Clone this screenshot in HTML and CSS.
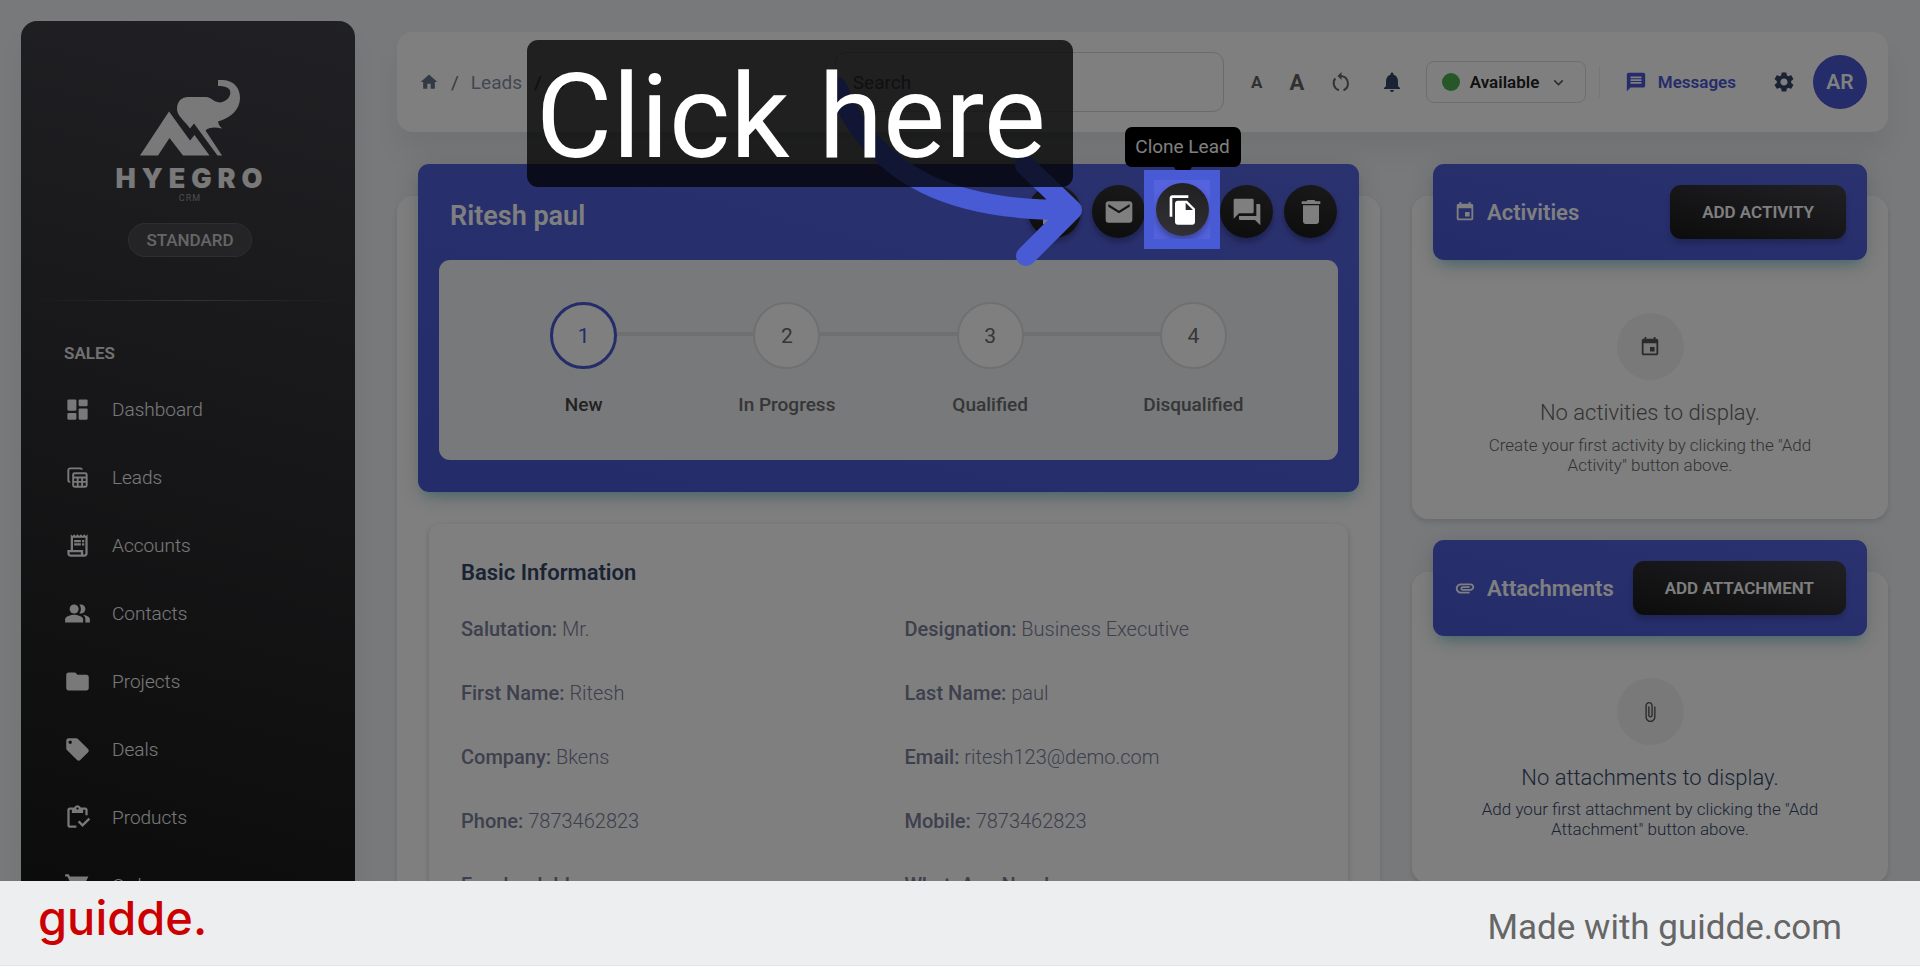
FILE: index.html
```html
<!DOCTYPE html>
<html lang="en">
<head>
<meta charset="utf-8">
<title>Hyegro CRM – Lead</title>
<link rel="stylesheet" href="styles.css">
</head>
<body>
<div class="stage">
  <aside class="sidebar">
    <div class="brand">
      <svg class="brand-mark" viewBox="0 0 100 76" aria-hidden="true">
        <path d="M0 75.500L29 31.500 50 60.500 54.500 55 69.500 75.500H43L29.500 58 18 75.500z"/>
        <path d="M37 29C37 21 42 17 48 17H66C71 17 73 22 80 22.500C91 21 93 10 87 7.500C84 6 81 6 78 6V0C92-1 100 6 100 18C100 30 90 38 78 41.500L79 45 82 48.500C75 47 69 47 65.500 50.500L82 75.500H77.500L54 43.500 50 48.500C45 41 37 36 37 29z"/>
      </svg>
      <div class="brand-name">HYEGRO</div>
      <div class="brand-sub">CRM</div>
      <span class="plan">STANDARD</span>
    </div>
    <hr class="side-rule">
    <h2 class="side-title">SALES</h2>
    <nav class="side-nav">
      <a href="#"><svg viewBox="0 0 24 24"><rect x="3" y="3" width="8" height="10" rx="1"/><rect x="13" y="3" width="8" height="6" rx="1"/><rect x="3" y="15" width="8" height="6" rx="1"/><rect x="13" y="11" width="8" height="10" rx="1"/></svg>Dashboard</a>
      <a href="#"><svg viewBox="-2 -2 28 28" class="line"><path d="M4.500 16.500H4a1.500 1.500 0 0 1-1.500-1.500V4.500A2 2 0 0 1 4.500 2.500H15A1.500 1.500 0 0 1 16.500 4"/><rect x="7.500" y="7.500" width="14" height="14" rx="1.500"/><path d="M7.500 12h14M7.500 16.500h14M12.200 12v9.500M16.800 12v9.500"/></svg>Leads</a>
      <a href="#"><svg viewBox="0 0 24 24"><path d="M19.500 3.500 18 2l-1.500 1.500L15 2l-1.500 1.500L12 2l-1.500 1.500L9 2 7.500 3.500 6 2v14H3v3c0 1.660 1.340 3 3 3h12c1.660 0 3-1.340 3-3V2zM15 20H6c-.550 0-1-.450-1-1v-1h10zm4-1c0 .550-.450 1-1 1s-1-.450-1-1v-3H8V5h11z"/><path d="M9 7h6v2H9zM16 7h2v2h-2zM9 10h6v2H9zM16 10h2v2h-2z"/></svg>Accounts</a>
      <a href="#"><svg viewBox="0 0 24 24"><path d="M16.670 13.130C18.040 14.060 19 15.320 19 17v3h4v-3c0-2.180-3.570-3.470-6.330-3.870zM15 12c2.210 0 4-1.790 4-4s-1.790-4-4-4c-.470 0-.910.100-1.330.240C14.500 5.270 15 6.580 15 8s-.500 2.730-1.330 3.760c.420.140.860.240 1.330.240z"/><circle cx="9" cy="8" r="4"/><path d="M9 13c-2.670 0-8 1.340-8 4v3h16v-3c0-2.660-5.330-4-8-4z"/></svg>Contacts</a>
      <a href="#"><svg viewBox="0 0 24 24"><path d="M10 4H4c-1.100 0-2 .900-2 2v12c0 1.100.900 2 2 2h16c1.100 0 2-.900 2-2V8c0-1.100-.900-2-2-2h-8z"/></svg>Projects</a>
      <a href="#"><svg viewBox="0 0 24 24"><path d="M21.410 11.580l-9-9C12.050 2.220 11.550 2 11 2H4c-1.100 0-2 .900-2 2v7c0 .550.220 1.050.590 1.420l9 9c.360.360.860.580 1.410.580s1.050-.220 1.410-.590l7-7c.370-.360.590-.860.590-1.410s-.230-1.060-.590-1.420zM5.500 7C4.670 7 4 6.330 4 5.500S4.670 4 5.500 4 7 4.670 7 5.500 6.330 7 5.500 7z"/></svg>Deals</a>
      <a href="#"><svg viewBox="0 0 24 24"><path d="M5 5h2v3h10V5h2v5h2V5c0-1.100-.900-2-2-2h-4.180C14.400 1.840 13.300 1 12 1s-2.400.840-2.820 2H5c-1.100 0-2 .900-2 2v14c0 1.100.900 2 2 2h6v-2H5zm7-2c.550 0 1 .450 1 1s-.450 1-1 1-1-.450-1-1 .450-1 1-1z"/><path d="M21.750 12.250l-5.250 5.250-2.750-2.750-1.500 1.500 4.250 4.250 6.750-6.750z"/></svg>Products</a>
      <a href="#"><svg viewBox="0 0 24 24"><path d="M7 18c-1.100 0-1.990.900-1.990 2S5.900 22 7 22s2-.900 2-2-.900-2-2-2zM1 2v2h2l3.600 7.590-1.350 2.450C4.520 15.370 5.480 17 7 17h12v-2H7.420l1.130-2h7.450c.750 0 1.410-.410 1.750-1.030L21.700 4H5.210l-.940-2H1z"/></svg>Orders</a>
    </nav>
  </aside>

  <div class="page">
    <header class="topbar">
      <nav class="crumbs">
        <a href="#" aria-label="Home"><svg viewBox="0 0 24 24"><path d="M10 20v-6h4v6h5v-8h3L12 3 2 12h3v8z"/></svg></a>
        <span class="sep">/</span><a href="#">Leads</a><span class="sep">/</span><span class="here">S</span>
      </nav>
      <input class="search" type="text" placeholder="Search" aria-label="Search">
      <div class="tools">
        <button class="tool small-a" aria-label="Smaller text">A</button>
        <button class="tool big-a" aria-label="Larger text">A</button>
        <button class="tool" aria-label="Reset text"><svg viewBox="0 0 24 24"><path d="M12.500 2v8L8.500 6z"/><path class="ring" d="M12 6a7.500 7.500 0 0 1 2.500 14.300M6.300 8.400a7.500 7.500 0 0 0 3.600 11.800"/></svg></button>
        <button class="tool bell" aria-label="Notifications"><svg viewBox="0 0 24 24"><path d="M12 22c1.100 0 2-.900 2-2h-4c0 1.100.890 2 2 2zm6-6v-5c0-3.070-1.640-5.640-4.500-6.320V4c0-.830-.670-1.500-1.500-1.500s-1.500.670-1.500 1.500v.680C7.630 5.360 6 7.920 6 11v5l-2 2v1h16v-1z"/></svg></button>
        <button class="status"><i class="dot"></i>Available<svg viewBox="0 0 24 24"><path d="M6 9l6 6 6-6"/></svg></button>
        <span class="bar"></span>
        <a class="messages" href="#"><svg viewBox="0 0 24 24"><path d="M20 2H4c-1.100 0-2 .900-2 2v18l4-4h14c1.100 0 2-.900 2-2V4c0-1.100-.900-2-2-2zm-2 12H6v-2h12zm0-3H6V9h12zm0-3H6V6h12z"/></svg>Messages</a>
        <button class="tool gear" aria-label="Settings"><svg viewBox="0 0 24 24"><path d="M19.140 12.940c.040-.300.060-.610.060-.940 0-.320-.020-.640-.070-.940l2.030-1.580c.180-.140.230-.410.120-.610l-1.920-3.320c-.120-.220-.370-.290-.590-.220l-2.390.960c-.500-.380-1.030-.700-1.620-.940l-.360-2.540c-.040-.240-.240-.410-.480-.410h-3.840c-.240 0-.430.170-.470.410l-.360 2.540c-.590.240-1.130.570-1.620.940l-2.390-.960c-.220-.080-.470 0-.590.220L2.740 8.870c-.120.210-.080.470.120.610l2.030 1.580c-.050.300-.090.630-.090.940s.020.640.070.940l-2.030 1.580c-.180.140-.230.410-.120.610l1.920 3.320c.120.220.370.290.590.220l2.390-.960c.500.380 1.030.700 1.620.940l.360 2.540c.050.240.240.410.480.410h3.840c.240 0 .440-.170.470-.410l.360-2.540c.590-.240 1.130-.560 1.620-.940l2.390.960c.220.080.470 0 .590-.220l1.920-3.320c.120-.220.070-.470-.120-.610zM12 15.600c-1.980 0-3.600-1.620-3.600-3.600s1.620-3.600 3.600-3.600 3.600 1.620 3.600 3.600-1.620 3.600-3.600 3.600z"/></svg></button>
        <button class="avatar">AR</button>
      </div>
    </header>

    <main class="content">
      <section class="card lead">
        <div class="card-head lead-head">
          <div class="lead-top">
            <h1>Ritesh paul</h1>
            <div class="actions">
              <button class="round" aria-label="Edit"><svg viewBox="0 0 24 24"><path d="M3 17.250V21h3.750L17.810 9.940l-3.750-3.750zM20.710 7.040a1 1 0 0 0 0-1.410l-2.340-2.340a1 1 0 0 0-1.410 0l-1.830 1.830 3.750 3.750z"/></svg></button>
              <button class="round" aria-label="Email"><svg viewBox="0 0 24 24"><path d="M20 4H4c-1.100 0-1.990.900-1.990 2L2 18c0 1.100.900 2 2 2h16c1.100 0 2-.900 2-2V6c0-1.100-.900-2-2-2zm0 4l-8 5-8-5V6l8 5 8-5z"/></svg></button>
              <div class="clone">
                <button class="round raised" aria-label="Clone Lead"><svg viewBox="0 0 24 24"><path d="M16 1H4c-1.100 0-2 .900-2 2v14h2V3h12zm-1 4H8c-1.100 0-1.990.900-1.990 2L6 21c0 1.100.890 2 1.990 2H19c1.100 0 2-.900 2-2V11zm-1 7V6.500l5.500 5.500z"/></svg></button>
                <div class="tip">Clone Lead</div>
                <div class="spot"></div>
                <svg class="arrow" viewBox="0 0 260 200" aria-hidden="true"><path d="M12 16C50 110 135 140 245 139M200 94L247 139 201 185"/></svg>
                <div class="callout">Click here</div>
              </div>
              <button class="round" aria-label="Comments"><svg viewBox="0 0 24 24"><path d="M21 6h-2v9H6v2c0 .550.450 1 1 1h11l4 4V7c0-.550-.450-1-1-1zm-4 6V3c0-.550-.450-1-1-1H3c-.550 0-1 .450-1 1v14l4-4h10c.550 0 1-.450 1-1z"/></svg></button>
              <button class="round" aria-label="Delete"><svg viewBox="0 0 24 24"><path d="M6 19c0 1.100.900 2 2 2h8c1.100 0 2-.900 2-2V7H6zM19 4h-3.500l-1-1h-5l-1 1H5v2h14z"/></svg></button>
            </div>
          </div>
          <ol class="steps">
            <li class="active"><span class="num">1</span>New</li>
            <li><span class="num">2</span>In Progress</li>
            <li><span class="num">3</span>Qualified</li>
            <li><span class="num">4</span>Disqualified</li>
          </ol>
        </div>
        <div class="info">
          <h2>Basic Information</h2>
          <dl class="fields">
            <div><dt>Salutation:</dt> <dd>Mr.</dd></div>
            <div><dt>Designation:</dt> <dd>Business Executive</dd></div>
            <div><dt>First Name:</dt> <dd>Ritesh</dd></div>
            <div><dt>Last Name:</dt> <dd>paul</dd></div>
            <div><dt>Company:</dt> <dd>Bkens</dd></div>
            <div><dt>Email:</dt> <dd>ritesh123@demo.com</dd></div>
            <div><dt>Phone:</dt> <dd>7873462823</dd></div>
            <div><dt>Mobile:</dt> <dd>7873462823</dd></div>
            <div><dt>Facebook Id:</dt> <dd></dd></div>
            <div><dt>WhatsApp Number:</dt> <dd></dd></div>
          </dl>
        </div>
      </section>

      <div class="side-cards">
        <section class="card">
          <div class="card-head bar-head">
            <svg viewBox="0 0 24 24"><path d="M17 12h-5v5h5zM16 1v2H8V1H6v2H5c-1.110 0-1.990.900-1.990 2L3 19c0 1.100.890 2 2 2h14c1.100 0 2-.900 2-2V5c0-1.100-.900-2-2-2h-1V1zm3 18H5V8h14z"/></svg>
            <h2>Activities</h2>
            <button class="dark">ADD ACTIVITY</button>
          </div>
          <div class="empty">
            <span class="disc"><svg viewBox="0 0 24 24"><path d="M17 12h-5v5h5zM16 1v2H8V1H6v2H5c-1.110 0-1.990.900-1.990 2L3 19c0 1.100.890 2 2 2h14c1.100 0 2-.900 2-2V5c0-1.100-.900-2-2-2h-1V1zm3 18H5V8h14z"/></svg></span>
            <h3>No activities to display.</h3>
            <p>Create your first activity by clicking the "Add Activity" button above.</p>
          </div>
        </section>
        <section class="card attachments">
          <div class="card-head bar-head">
            <svg viewBox="0 0 24 24"><path d="M2 12.500C2 9.460 4.460 7 7.500 7H18c2.210 0 4 1.790 4 4s-1.790 4-4 4H9.500C8.120 15 7 13.880 7 12.500S8.120 10 9.500 10H17v2H9.410c-.550 0-.550 1 0 1H18c1.100 0 2-.900 2-2s-.900-2-2-2H7.500C5.570 9 4 10.570 4 12.500S5.570 16 7.500 16H17v2H7.500C4.460 18 2 15.540 2 12.500z"/></svg>
            <h2>Attachments</h2>
            <button class="dark">ADD ATTACHMENT</button>
          </div>
          <div class="empty">
            <span class="disc"><svg viewBox="0 0 24 24"><path d="M16.500 6v11.500c0 2.210-1.790 4-4 4s-4-1.790-4-4V5c0-1.380 1.120-2.500 2.500-2.500s2.500 1.120 2.500 2.500v10.500c0 .550-.450 1-1 1s-1-.450-1-1V6H10v9.500c0 1.380 1.120 2.500 2.500 2.500s2.500-1.120 2.500-2.500V5c0-2.210-1.790-4-4-4S7 2.790 7 5v12.500c0 3.040 2.460 5.500 5.500 5.500s5.500-2.460 5.500-5.500V6z"/></svg></span>
            <h3>No attachments to display.</h3>
            <p>Add your first attachment by clicking the "Add Attachment" button above.</p>
          </div>
        </section>
      </div>
    </main>
  </div>
</div>
<footer class="footer">
  <span class="guidde">guidde.</span>
  <a class="made" href="#">Made with guidde.com</a>
</footer>
</body>
</html>
```
FILE: styles.css
```css
* { box-sizing: border-box; }
body {
  margin: 0;
  height: 100vh;
  display: flex;
  flex-direction: column;
  overflow: hidden;
  font-family: Roboto, "Liberation Sans", sans-serif;
  background: #f0f2f5;
}
h1, h2, h3, p, dl, dd, ol { margin: 0; padding: 0; }
h1, h2, h3 { font-weight: 500; }
a { color: inherit; text-decoration: none; }
button { font: inherit; color: inherit; border: 0; background: none; padding: 0; }
svg { fill: currentColor; display: block; flex: none; }

.stage {
  flex: 1;
  min-height: 0;
  display: flex;
  gap: 42px;
  padding: 21px 32px 0 21px;
  overflow: hidden;
  position: relative;
}

/* Sidebar */
.sidebar {
  width: 334px;
  flex: none;
  height: 945px;
  border-radius: 16px;
  color: #f2f2f2;
  background: linear-gradient(195deg, #42424a, #191919 90%);
  box-shadow: 0 20px 27px rgba(0, 0, 0, .05);
}
.brand { display: flex; flex-direction: column; align-items: center; padding: 59px 0 0 4px; }
.brand-mark { width: 100px; height: 76px; }
.brand-name { margin-top: 9px; font: 900 27px/28px Inter, sans-serif; letter-spacing: 6px; padding-left: 4px; }
.brand-sub { font-size: 9px; line-height: 12px; letter-spacing: 1px; color: #999; margin-top: -1px; }
.plan {
  margin-top: 19px;
  padding: 0 17px;
  line-height: 32px;
  border: 1px solid #5c5c60;
  border-radius: 17px;
  background: #48484c;
  font-size: 17px;
  font-weight: 500;
  color: #ccc;
}
.side-rule { height: 1px; border: 0; margin: 43px 10px 0; background: linear-gradient(90deg, transparent, #666, transparent); }
.side-title { margin: 42px 43px 0; font-size: 17px; line-height: 20px; font-weight: 600; color: #e2e2e2; }
.side-nav { display: flex; flex-direction: column; padding: 12px 43px 0; }
.side-nav a { display: flex; align-items: center; gap: 21px; height: 68px; font-size: 19px; font-weight: 300; }
.side-nav svg { width: 27px; height: 27px; }
.side-nav .line { fill: none; stroke: currentColor; stroke-width: 2; }

/* Top bar */
.page { flex: 1; min-width: 0; padding-top: 11px; }
.topbar {
  height: 100px;
  display: flex;
  align-items: center;
  padding: 0 21px 0 22px;
  border-radius: 16px;
  background: #fff;
  box-shadow: 0 20px 27px rgba(0, 0, 0, .06);
}
.crumbs { display: flex; align-items: center; gap: 12px; flex: 1; font-size: 19px; color: #8490a3; }
.crumbs svg { width: 20px; height: 20px; color: #66758a; }
.crumbs .sep { color: #6c757d; }
.crumbs .here { color: #344767; }
.search {
  width: 389px;
  height: 60px;
  border: 1px solid #d2d6da;
  border-radius: 11px;
  padding: 0 17px;
  background: #fff;
  font: 400 19px Roboto, sans-serif;
}
.search::placeholder { color: #7b809a; opacity: 1; }
.tools { display: flex; align-items: center; margin-left: 16px; color: #666; }
.tool { width: 43px; height: 43px; display: grid; place-items: center; font-weight: 700; }
.tool svg { width: 24px; height: 24px; }
.tool .ring { fill: none; stroke: currentColor; stroke-width: 2; }
.small-a { width: 34px; font-size: 17px; }
.big-a { width: 46px; font-size: 22px; }
.small-a, .big-a { color: #606060; }
.bell { width: 58px; color: #344767; }
.status {
  width: 160px;
  height: 42px;
  margin-left: 5px;
  display: flex;
  align-items: center;
  gap: 10px;
  padding: 0 15px;
  border: 1px solid #d9dbe0;
  border-radius: 8px;
  color: #222;
  font-size: 17px;
  font-weight: 600;
}
.dot { width: 18px; height: 18px; border-radius: 50%; background: #4caf50; }
.status svg { width: 17px; height: 17px; margin-left: 1px; fill: none; stroke: #555; stroke-width: 2; }
.bar { width: 1px; height: 32px; margin: 0 25px 0 13px; background: #eee; }
.messages { display: flex; align-items: center; gap: 11px; color: #4a58d2; font-size: 17px; font-weight: 600; }
.messages svg { width: 22px; height: 22px; }
.gear { margin: 0 8px 0 26px; color: #344767; }
.avatar { width: 54px; height: 54px; border-radius: 50%; background: #4858d2; color: #fff; font-size: 21px; font-weight: 600; }

/* Cards */
.content { display: grid; grid-template-columns: minmax(0, 983fr) minmax(0, 476fr); gap: 32px; padding-top: 64px; }
.card {
  border-radius: 16px;
  background: #fff;
  padding: 0 21px;
  box-shadow: 0 4px 6px rgba(0, 0, 0, .08), 0 2px 4px rgba(0, 0, 0, .05);
}
.card-head {
  margin-top: -32px;
  padding: 21px;
  border-radius: 11px;
  color: #fff;
  background: linear-gradient(195deg, #5664e0, #4858d2);
  box-shadow: 0 5px 27px rgba(0, 0, 0, .14), 0 9px 13px -6px rgba(0, 187, 212, .4);
}
.lead { height: 760px; }
.lead-head { padding-bottom: 32px; }
.lead-top { display: flex; align-items: center; justify-content: space-between; height: 75px; padding: 0 1px 22px 11px; }
.lead-top h1 { font-size: 27px; line-height: 32px; margin-top: 8px; font-weight: 600; }
.actions { display: flex; gap: 11px; }
.round {
  width: 53px;
  height: 53px;
  display: grid;
  place-items: center;
  border-radius: 50%;
  color: #fff;
  background: linear-gradient(195deg, #353538, #191919);
  box-shadow: 0 4px 6px rgba(0, 0, 0, .3);
}
.round svg { width: 32px; height: 32px; }
.clone { position: relative; }
.raised { margin-top: -2px; background: linear-gradient(195deg, #1f1f1f, #333338); }
.tip {
  position: absolute;
  bottom: 71px;
  left: 50%;
  margin-left: -58px;
  width: 116px;
  line-height: 40px;
  border-radius: 7px;
  background: #000;
  font-size: 19px;
  text-align: center;
}
.tip::after { content: ""; position: absolute; left: 49px; top: 38px; width: 18px; height: 9px; border-radius: 0 0 9px 9px; background: #000; }

/* Walkthrough layer: the spotlight's spread shadow dims the rest of the stage */
.spot {
  position: absolute;
  z-index: 10;
  left: -12px;
  top: -15px;
  width: 76px;
  height: 79px;
  border: 10px solid #485ad4;
  box-shadow: 0 0 0 2000px rgba(0, 0, 0, .5);
}
.arrow { position: absolute; z-index: 11; width: 260px; height: 200px; right: 124px; top: -114px; fill: none; stroke: #485ad4; stroke-width: 20; stroke-linecap: round; stroke-linejoin: round; }
.callout {
  position: absolute;
  z-index: 12;
  right: 136px;
  top: -145px;
  height: 147px;
  width: 546px;
  padding: 4px 0 0 9px;
  border-radius: 11px;
  background: rgba(0, 0, 0, .75);
  font: 400 117px/147px Roboto, sans-serif;
  white-space: nowrap;
}

.steps {
  list-style: none;
  display: flex;
  height: 200px;
  padding: 42px 43px 0;
  border-radius: 11px;
  background: #f0f2f5;
  color: #6c6c6c;
  font-size: 19px;
  font-weight: 500;
}
.steps li { flex: 1; display: flex; flex-direction: column; align-items: center; gap: 24px; line-height: 24px; position: relative; }
.steps li + li::before { content: ""; position: absolute; right: calc(50% + 33px); width: calc(100% - 66px); top: 30px; height: 4px; background: #e0e0e0; }
.steps .num {
  width: 67px;
  height: 67px;
  display: grid;
  place-items: center;
  border: 2px solid #e0e0e0;
  border-radius: 50%;
  background: #fff;
  font-size: 21px;
  font-weight: 400;
}
.steps .active { color: #444; }
.steps .active .num { border: 3px solid #4858d2; color: #4858d2; }

.info {
  margin: 32px 11px 0;
  height: 480px;
  padding: 32px;
  border-radius: 11px;
  background: #fff;
  box-shadow: 0 2px 6px rgba(0, 0, 0, .2);
}
.info h2 { font-size: 22px; line-height: 34px; font-weight: 600; color: #344767; }
.fields { display: grid; grid-template-columns: 1fr 1fr; column-gap: 32px; padding-top: 7px; }
.fields div { line-height: 64px; font-size: 20px; font-weight: 300; color: #7b809a; white-space: nowrap; }
.fields dt, .fields dd { display: inline; }
.fields dt { font-weight: 500; }

.side-cards { display: flex; flex-direction: column; gap: 53px; }
.bar-head { display: flex; align-items: center; height: 96px; }
.bar-head svg { width: 22px; height: 22px; margin-right: 11px; }
.bar-head h2 { flex: 1; font-size: 22px; font-weight: 600; }
.dark {
  height: 54px;
  padding: 0 32px;
  border-radius: 11px;
  background: linear-gradient(195deg, #42424a, #191919);
  font-size: 17px;
  font-weight: 600;
  box-shadow: 0 4px 6px rgba(0, 0, 0, .2);
}
.empty { display: flex; flex-direction: column; align-items: center; padding: 53px 40px 44px; text-align: center; color: #666; }
.disc { width: 67px; height: 67px; border-radius: 50%; display: grid; place-items: center; background: #f3f3f3; color: #555; }
.disc svg { width: 22px; height: 22px; }
.empty h3 { margin-top: 20px; font-size: 22px; line-height: 26px; font-weight: 300; }
.empty p { margin-top: 9px; font-size: 17px; line-height: 20px; font-weight: 300; }
.attachments .empty { padding-top: 42px; color: #344767; }
.attachments .empty p { margin-top: 8px; }

.footer {
  height: 85px;
  flex: none;
  display: flex;
  align-items: center;
  justify-content: space-between;
  padding: 0 78px 0 38px;
  background: #edeef0;
  border-bottom: 1px solid #e2e3e5;
}
.guidde { font: 500 47px/56px Inter, sans-serif; color: #c00; padding-bottom: 11px; }
.made { font-size: 35px; color: #666; padding-top: 8px; }
```
